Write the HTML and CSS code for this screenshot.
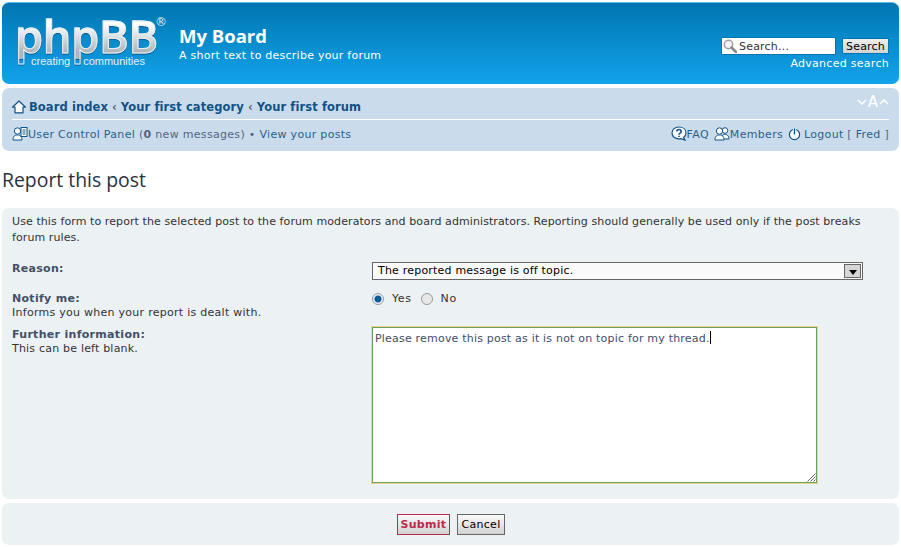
FILE: index.html
```html
<!DOCTYPE html>
<html lang="en">
<head>
  <meta charset="UTF-8">
  <title>My Board - Report this post</title>
  <link rel="stylesheet" href="styles.css">
</head>
<body>
  <div class="headerbar">
    <a class="logo" href="#">
      <span class="logo-word">phpBB</span>
      <span class="logo-reg">®</span>
      <span class="logo-tag"><span>creating</span><span>communities</span></span>
    </a>
    <div class="site-desc">
      <h1>My Board</h1>
      <p>A short text to describe your forum</p>
    </div>
    <div class="search-box">
      <div class="search-row">
        <div class="search-input">
          <svg class="search-icon" width="14" height="14" viewBox="0 0 14 14">
            <circle cx="5.500" cy="5.500" r="4.200" fill="#f4f4f4" stroke="#a0a0a0" stroke-width="1.500"/>
            <path d="M8.500 8.500 L13 13" stroke="#8a8a8a" stroke-width="2.600" stroke-linecap="round"/>
          </svg>
          <span>Search...</span>
        </div>
        <button class="search-btn">Search</button>
      </div>
      <a class="adv-link" href="#">Advanced search</a>
    </div>
  </div>

  <div class="navbar">
    <div class="nav-top">
      <svg class="icon icon-home" width="14" height="14" viewBox="0 0 14 14">
        <path d="M7 1 L13.500 7.200 H11 V12.800 H3 V7.200 H0.500 Z" fill="#fff" stroke="#105289" stroke-width="1.200" stroke-linejoin="round"/>
      </svg>
      <a href="#">Board index</a>
      <span class="crumb-sep">‹</span>
      <a href="#">Your first category</a>
      <span class="crumb-sep">‹</span>
      <a href="#">Your first forum</a>
      <span class="font-size">
        <svg width="10" height="6" viewBox="0 0 10 6"><path d="M1 1 L5 5 L9 1" fill="none" stroke="#fff" stroke-width="1.500"/></svg>
        <span>A</span>
        <svg width="10" height="6" viewBox="0 0 10 6"><path d="M1 5 L5 1 L9 5" fill="none" stroke="#fff" stroke-width="1.500"/></svg>
      </span>
    </div>
    <div class="nav-bottom">
      <div class="nav-left">
        <svg class="icon" width="16" height="15" viewBox="0 0 16 15">
          <circle cx="5.500" cy="5" r="3.200" fill="#fff" stroke="#105289"/>
          <path d="M1 14 C1 10 3 9 5.500 9 C8 9 10 10 10 14 Z" fill="#fff" stroke="#105289"/>
          <rect x="9" y="1.500" width="6" height="9" fill="#fff" stroke="#105289"/>
          <path d="M10.500 4 H13.500 M10.500 6 H13.500 M10.500 8 H13.500" stroke="#105289"/>
        </svg><a href="#">User Control Panel</a> (<b>0</b> new messages) • <a href="#">View your posts</a>
      </div>
      <div class="nav-right">
        <span class="nav-item">
          <svg class="icon" width="16" height="15" viewBox="0 0 16 15">
            <path d="M8 1 C12 1 15 3.400 15 7 C15 9 14 10.400 12.500 11.400 L14 14 L10 12.600 C9.400 12.800 8.700 12.900 8 12.900 C4 12.900 1 10.500 1 7 C1 3.400 4 1 8 1 Z" fill="#fff" stroke="#105289" stroke-width="1.200"/>
            <path d="M5.800 5.500 C5.800 2.800 10.200 2.800 10.200 5.500 C10.200 7.300 8 7 8 8.700 M8 9.800 V11" fill="none" stroke="#105289" stroke-width="1.600"/>
          </svg><a href="#">FAQ</a>
        </span>
        <span class="nav-item">
          <svg class="icon" width="16" height="15" viewBox="0 0 16 15">
            <circle cx="11" cy="4.500" r="2.800" fill="#fff" stroke="#105289"/>
            <path d="M7 13 C7 9.500 9 8.500 11 8.500 C13 8.500 15 9.500 15 13 Z" fill="#fff" stroke="#105289"/>
            <circle cx="5.500" cy="5" r="3.200" fill="#fff" stroke="#105289"/>
            <path d="M1 14 C1 10 3 9 5.500 9 C8 9 10 10 10 14 Z" fill="#fff" stroke="#105289"/>
          </svg><a href="#">Members</a>
        </span>
        <span class="nav-item">
          <svg class="icon icon-logout" width="13" height="14" viewBox="0 0 14 14">
            <circle cx="7" cy="7.500" r="5.500" fill="#fff" stroke="#105289" stroke-width="1.300"/>
            <path d="M7 1 V7.500" stroke="#fff" stroke-width="3.500"/>
            <path d="M7 1 V7.500" stroke="#105289" stroke-width="1.500"/>
          </svg><a href="#">Logout</a> [ <a href="#">Fred</a> ]
        </span>
      </div>
    </div>
  </div>

  <h2 class="page-title">Report this post</h2>

  <form class="panel report-panel">
    <p class="intro">Use this form to report the selected post to the forum moderators and board administrators. Reporting should generally be used only if the post breaks forum rules.</p>
    <div class="field field-reason">
      <div class="field-label"><b>Reason:</b></div>
      <div class="field-input">
        <div class="select-box">
          <span>The reported message is off topic.</span>
          <span class="select-arrow"><span class="arrow-down"></span></span>
        </div>
      </div>
    </div>
    <div class="field field-notify">
      <div class="field-label"><b>Notify me:</b><br>Informs you when your report is dealt with.</div>
      <div class="field-input radios">
        <span class="radio radio-on"></span><label>Yes</label>
        <span class="radio"></span><label>No</label>
      </div>
    </div>
    <div class="field">
      <div class="field-label field-label-low"><b>Further information:</b><br>This can be left blank.</div>
      <div class="field-input">
        <div class="textarea-box">Please remove this post as it is not on topic for my thread.<span class="caret"></span>
          <svg class="grip" width="9" height="9" viewBox="0 0 9 9">
            <path d="M8.500 0.500 L0.500 8.500 M8.500 3.500 L3.500 8.500 M8.500 6.500 L6.500 8.500" stroke="#666" stroke-width="1"/>
          </svg>
        </div>
      </div>
    </div>
  </form>

  <div class="panel button-panel">
    <button class="btn btn-submit" type="button">Submit</button>
    <button class="btn" type="button">Cancel</button>
  </div>
</body>
</html>
```

FILE: styles.css
```css
* {
  box-sizing: border-box;
}

html, body {
  margin: 0;
  padding: 0;
}

body {
  font-family: "DejaVu Sans", Verdana, sans-serif;
  font-size: 11px;
  letter-spacing: 0.2px;
  color: #536482;
  background-color: #fff;
  padding: 2px 2px 0;
  height: 547px;
  overflow: hidden;
}

a {
  color: #2a6090;
  text-decoration: none;
}

/* header */
.headerbar {
  display: flex;
  height: 82px;
  padding: 13px 10px 0 15px;
  border-top: 1px solid #5cbcee;
  border-radius: 7px;
  background: linear-gradient(to bottom, #0076b1 0%, #12a3eb 100%);
  color: #fff;
}

.logo {
  display: block;
  position: relative;
  width: 162px;
  height: 56px;
  flex: none;
}

.logo-word {
  display: block;
  margin: -3px 0 0 -2px;
  font-family: "Open Sans", sans-serif;
  font-size: 45px;
  font-weight: 600;
  line-height: 46px;
  letter-spacing: -0.2px;
  background: linear-gradient(to bottom, #ffffff 25%, #aab6bc 85%);
  -webkit-background-clip: text;
  background-clip: text;
  color: transparent;
  -webkit-text-stroke: 1px #e8eef1;
  filter: drop-shadow(0 1px 0 #0a6296);
}

.logo-reg {
  position: absolute;
  top: 0;
  left: 138px;
  font-size: 12px;
  line-height: 12px;
  letter-spacing: 0;
  color: #e3edf3;
}

.logo-tag {
  position: absolute;
  left: 14px;
  top: 39px;
  display: flex;
  gap: 13px;
  font-family: "Liberation Sans", sans-serif;
  font-size: 11px;
  line-height: 12px;
  letter-spacing: 0;
  color: #e6f0f5;
}

.site-desc {
  padding-top: 8px;
}

.site-desc h1 {
  margin: 0;
  font-family: "Open Sans", sans-serif;
  font-size: 18.500px;
  line-height: 24px;
  font-weight: 700;
  letter-spacing: 0;
}

.site-desc p {
  margin: 1px 0 0;
  font-size: 11px;
  line-height: 14px;
  letter-spacing: 0.24px;
}

.search-box {
  margin-left: auto;
  padding-top: 21px;
  text-align: right;
}

.search-row {
  display: flex;
  gap: 6px;
  align-items: center;
}

.search-input {
  display: flex;
  align-items: center;
  gap: 2px;
  width: 115px;
  height: 18px;
  padding-left: 1px;
  border: 1px solid #0075b0;
  background: #fff;
  color: #333;
  text-align: left;
}

.search-btn {
  height: 16px;
  padding: 0 3px;
  font: 11px "DejaVu Sans", sans-serif;
  letter-spacing: 0.2px;
  color: #000;
  border: 1px solid #0075b0;
  background: linear-gradient(to bottom, #efefef, #d2d2d2);
}

.adv-link {
  display: block;
  margin-top: 2px;
  color: #fff;
  line-height: 14px;
  letter-spacing: 0.28px;
}

/* nav */
.navbar {
  margin-top: 4px;
  height: 63px;
  padding: 0 10px;
  border-radius: 7px;
  background: #cadceb;
}

.icon {
  flex: none;
  vertical-align: -3px;
}

.icon-home {
  margin-right: -1px;
}

.nav-top {
  position: relative;
  display: flex;
  align-items: center;
  gap: 4px;
  height: 32px;
  padding-top: 6px;
  border-bottom: 1px solid #fff;
  font-weight: 700;
  font-size: 11.500px;
  letter-spacing: 0.1px;
}

.nav-top a {
  color: #105289;
}

.crumb-sep {
  color: #536482;
}

.font-size {
  position: absolute;
  right: 0;
  top: 5px;
  display: flex;
  align-items: center;
  gap: 1px;
  color: #fff;
  font-weight: 400;
  font-size: 15px;
}

.nav-bottom {
  display: flex;
  justify-content: space-between;
  align-items: center;
  height: 27px;
  letter-spacing: 0.31px;
}

.nav-right {
  display: flex;
  align-items: baseline;
  gap: 5px;
}

.icon-logout {
  margin-right: 3px;
}

/* page title */
.page-title {
  margin: 17px 0 16px;
  font-family: "Open Sans", sans-serif;
  font-size: 19.400px;
  line-height: 24px;
  font-weight: 400;
  letter-spacing: 0;
  color: #28313f;
}

/* panels */
.panel {
  border-radius: 7px;
  background: #ecf1f3;
}

.report-panel {
  height: 291px;
  padding: 6px 10px 0;
}

.intro {
  margin: 0 0 16px;
  line-height: 16px;
  letter-spacing: 0.09px;
  color: #333;
}

.field {
  display: flex;
  line-height: 14px;
  color: #333;
}

.field-label {
  width: 360px;
  flex: none;
}

.field-label-low {
  padding-top: 1px;
}

.field-label b {
  color: #425067;
  letter-spacing: 0.3px;
}

.field-reason {
  height: 30px;
}

.field-notify {
  height: 35px;
  letter-spacing: 0.27px;
}

.select-box {
  display: flex;
  align-items: center;
  justify-content: space-between;
  width: 491px;
  height: 18px;
  padding: 0 1px 0 5px;
  border: 1px solid #666;
  background: #fafafa;
  color: #000;
}

.select-arrow {
  display: flex;
  align-items: center;
  justify-content: center;
  width: 17px;
  height: 14px;
  border: 1px solid #666;
  background: #d6d6d6;
}

.arrow-down {
  margin-top: 3px;
  border-top: 5px solid #000;
  border-left: 4px solid transparent;
  border-right: 4px solid transparent;
}

.radios {
  display: flex;
  align-items: flex-start;
}

.radios label {
  margin: 0 9px 0 8px;
  letter-spacing: 0.6px;
}

.radio {
  width: 12px;
  height: 12px;
  margin-top: 1px;
  border: 1px solid #9a9a9a;
  border-radius: 50%;
  background: #e8e8e8;
}

.radio-on {
  background: radial-gradient(circle, #0a5d92 0 3px, #eeeeff 4px);
}

.textarea-box {
  position: relative;
  width: 445px;
  height: 156px;
  padding: 3px 2px;
  border: 1px solid #6f9c60;
  outline: 1px solid #e8d78f;
  background: #fff;
  color: #3f4d6a;
  line-height: 14px;
}

.caret {
  display: inline-block;
  width: 1px;
  height: 13px;
  vertical-align: -2px;
  background: #000;
}

.grip {
  position: absolute;
  right: 0;
  bottom: 0;
}

.button-panel {
  display: flex;
  justify-content: center;
  align-items: center;
  gap: 7px;
  height: 42px;
  margin-top: 4px;
}

.btn {
  height: 21px;
  padding: 0 3px;
  font: 11px "DejaVu Sans", sans-serif;
  letter-spacing: 0.3px;
  color: #000;
  border: 1px solid #666;
  background: linear-gradient(to bottom, #fafafa, #d2d2d2);
}

.btn-submit {
  font-weight: 700;
  color: #bc2a4d;
  border-color: #bc2a4d;
}
```
